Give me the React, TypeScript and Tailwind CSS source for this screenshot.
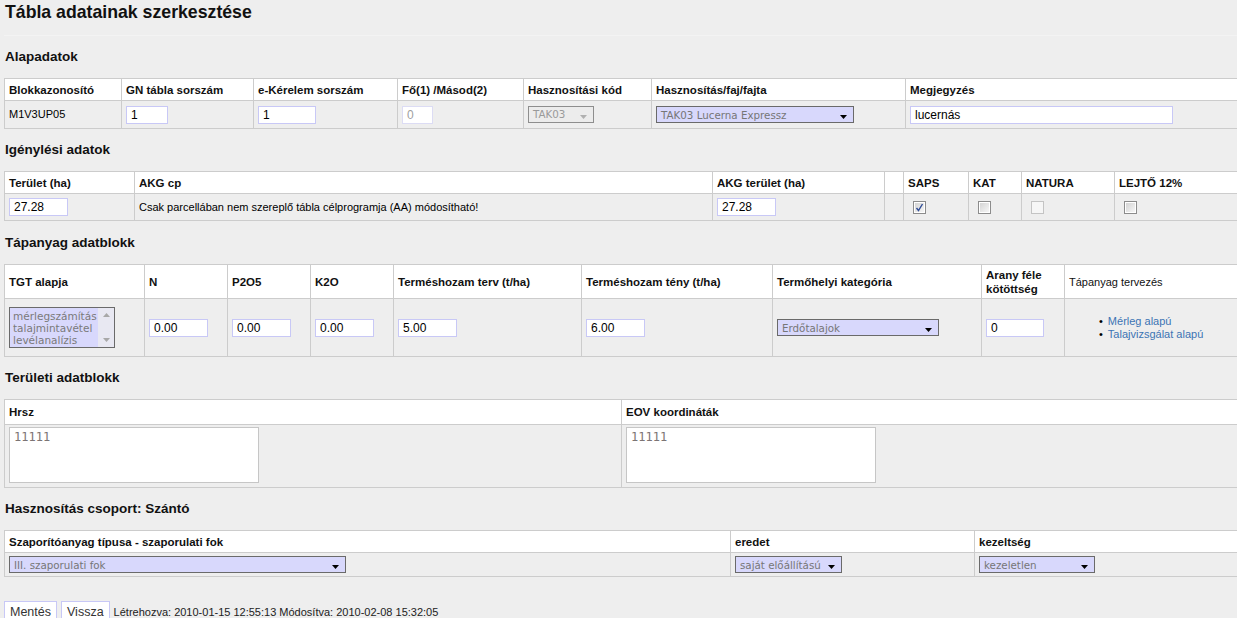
import React from "react";

const B = "border-[#cccccc]";

function Inp({ w, v, disabled }: { w: string; v: string; disabled?: boolean }) {
  return (
    <div
      className={`h-[18px] ${w} border bg-white flex items-center pl-[4px] text-[12px] ${
        disabled ? "border-[#dcdcf4] text-[#a0a0a0]" : "border-[#c8c8f6] text-black"
      }`}
    >
      {v}
    </div>
  );
}

function Arrow({ color = "#000" }: { color?: string }) {
  return (
    <svg width="7" height="4" viewBox="0 0 7 4" className="self-end mb-[3px] shrink-0">
      <path d="M0 0H7L3.5 4Z" fill={color} />
    </svg>
  );
}

function Sel({ w, v }: { w: string; v: string }) {
  return (
    <div
      className={`h-[17px] ${w} border border-[#6a6a6a] bg-[#d8d8fc] flex items-center justify-between pl-[4px] pr-[6px] text-[10.3px] text-[#767676] font-['DejaVu_Sans',Verdana,sans-serif]`}
    >
      <span className="leading-[14px]">{v}</span>
      <Arrow />
    </div>
  );
}

function Check({ checked, disabled }: { checked?: boolean; disabled?: boolean }) {
  if (disabled)
    return <div className="w-[13px] h-[13px] border border-[#c4c4c4] bg-[#f6f6f6]" />;
  return (
    <div className="w-[13px] h-[13px] border border-[#8c8c8c] bg-white p-[1px]">
      <div className="w-full h-full bg-linear-to-br from-[#d4d4d4] to-[#f6f6f6] flex items-center justify-center">
        {checked && (
          <svg width="9" height="9" viewBox="0 0 9 9">
            <path d="M1.5 5 L3.5 7.5 L7.5 1" stroke="#2f4c96" strokeWidth="1.4" fill="none" />
          </svg>
        )}
      </div>
    </div>
  );
}

const H = `bg-white border-r border-b ${B} pl-[4px] flex items-center font-bold text-[11.5px] leading-[14px] text-[#111]`;
const D = `border-r border-b ${B} pl-[4px] flex items-center text-[11px]`;

function Heading({ children, tall }: { children: React.ReactNode; tall?: boolean }) {
  return (
    <div
      className={`${tall ? "h-[43px] pt-[14px]" : "h-[42px] pt-[13px]"} pl-[1px] text-[13.5px] leading-[16px] font-bold text-[#111]`}
    >
      {children}
    </div>
  );
}

export default function App() {
  return (
    <div className="w-[1237px] h-[618px] overflow-hidden bg-[#eeeeee] text-black font-['Liberation_Sans',Arial,sans-serif]">
      <div className="h-[35px] pl-[5px] pt-[2px] text-[17.7px] leading-[20px] font-bold text-[#111]">
        Tábla adatainak szerkesztése
      </div>
      <div className="ml-[4px] border-t border-[#f3f3f3]">
        <Heading>Alapadatok</Heading>
        <div className={`grid grid-cols-[117px_132px_144px_126px_128px_254px_340px] grid-rows-[22px_28px] border-t border-l ${B}`}>
          <div className={H}>Blokkazonosító</div>
          <div className={H}>GN tábla sorszám</div>
          <div className={H}>e-Kérelem sorszám</div>
          <div className={H}>Fő(1) /Másod(2)</div>
          <div className={H}>Hasznosítási kód</div>
          <div className={H}>Hasznosítás/faj/fajta</div>
          <div className={H}>Megjegyzés</div>
          <div className={D}>M1V3UP05</div>
          <div className={D}>
            <Inp w="w-[42px]" v="1" />
          </div>
          <div className={D}>
            <Inp w="w-[58px]" v="1" />
          </div>
          <div className={D}>
            <Inp w="w-[31px]" v="0" disabled />
          </div>
          <div className={D}>
            <div className="h-[17px] w-[66px] border border-[#8e8e8e] bg-[#ececec] flex items-center justify-between pl-[4px] pr-[6px] text-[10.3px] text-[#9a9a9a] font-['DejaVu_Sans',Verdana,sans-serif]">
              <span>TAK03</span>
              <Arrow color="#b0b0b0" />
            </div>
          </div>
          <div className={D}>
            <Sel w="w-[198px]" v="TAK03 Lucerna Expressz" />
          </div>
          <div className={D}>
            <Inp w="w-[263px]" v="lucernás" />
          </div>
        </div>

        <Heading>Igénylési adatok</Heading>
        <div className={`grid grid-cols-[130px_578px_172px_19px_65px_53px_93px_130px] grid-rows-[22px_27px] border-t border-l ${B}`}>
          <div className={H}>Terület (ha)</div>
          <div className={H}>AKG cp</div>
          <div className={H}>AKG terület (ha)</div>
          <div className={H}></div>
          <div className={H}>SAPS</div>
          <div className={H}>KAT</div>
          <div className={H}>NATURA</div>
          <div className={H}>LEJTŐ 12%</div>
          <div className={D}>
            <Inp w="w-[59px]" v="27.28" />
          </div>
          <div className={D}>Csak parcellában nem szereplő tábla célprogramja (AA) módosítható!</div>
          <div className={D}>
            <Inp w="w-[59px]" v="27.28" />
          </div>
          <div className={D}></div>
          <div className={`${D} pl-[9px]`}>
            <Check checked />
          </div>
          <div className={`${D} pl-[9px]`}>
            <Check />
          </div>
          <div className={`${D} pl-[9px]`}>
            <Check disabled />
          </div>
          <div className={`${D} pl-[9px]`}>
            <Check />
          </div>
        </div>

        <Heading tall>Tápanyag adatblokk</Heading>
        <div className={`grid grid-cols-[140px_83px_83px_83px_188px_191px_209px_83px_180px] grid-rows-[34px_58px] border-t border-l ${B}`}>
          <div className={H}>TGT alapja</div>
          <div className={H}>N</div>
          <div className={H}>P2O5</div>
          <div className={H}>K2O</div>
          <div className={H}>Terméshozam terv (t/ha)</div>
          <div className={H}>Terméshozam tény (t/ha)</div>
          <div className={H}>Termőhelyi kategória</div>
          <div className={H}>Arany féle kötöttség</div>
          <div className={`${H} font-normal text-[11px]`}>Tápanyag tervezés</div>
          <div className={D}>
            <div className="w-[106px] h-[41px] border border-[#6a6a6a] bg-[#d8d8fc] flex">
              <div className="flex-1 pl-[3px] pt-[2px] text-[10.5px] leading-[12px] text-[#7a7a7a] font-['DejaVu_Sans',Verdana,sans-serif]">
                <div>mérlegszámítás</div>
                <div>talajmintavétel</div>
                <div>levélanalízis</div>
              </div>
              <div className="w-[16px] bg-[#e8e8f2] flex flex-col items-center justify-between py-[5px]">
                <svg width="7" height="4" viewBox="0 0 7 4">
                  <path d="M0 4H7L3.5 0Z" fill="#a8a8a8" />
                </svg>
                <svg width="7" height="4" viewBox="0 0 7 4">
                  <path d="M0 0H7L3.5 4Z" fill="#a8a8a8" />
                </svg>
              </div>
            </div>
          </div>
          <div className={D}>
            <Inp w="w-[59px]" v="0.00" />
          </div>
          <div className={D}>
            <Inp w="w-[59px]" v="0.00" />
          </div>
          <div className={D}>
            <Inp w="w-[59px]" v="0.00" />
          </div>
          <div className={D}>
            <Inp w="w-[59px]" v="5.00" />
          </div>
          <div className={D}>
            <Inp w="w-[59px]" v="6.00" />
          </div>
          <div className={D}>
            <Sel w="w-[162px]" v="Erdőtalajok" />
          </div>
          <div className={D}>
            <Inp w="w-[58px]" v="0" />
          </div>
          <div className={`${D} pl-[34px]`}>
            <div className="text-[11px] leading-[13px] text-[#3c74b4]">
              <div className="flex gap-[5px]">
                <span className="text-black">•</span>
                <span>Mérleg alapú</span>
              </div>
              <div className="flex gap-[5px]">
                <span className="text-black">•</span>
                <span>Talajvizsgálat alapú</span>
              </div>
            </div>
          </div>
        </div>

        <Heading>Területi adatblokk</Heading>
        <div className={`grid grid-cols-[617px_620px] grid-rows-[25px_63px] border-t border-l ${B}`}>
          <div className={H}>Hrsz</div>
          <div className={H}>EOV koordináták</div>
          <div className={`border-r border-b ${B} pl-[4px] pt-[2px]`}>
            <div className="w-[250px] h-[56px] border border-[#c6c6c6] bg-white pl-[4px] pt-[2px] text-[12px] leading-[14px] text-[#7c7474] font-['DejaVu_Sans_Mono',monospace]">
              11111
            </div>
          </div>
          <div className={`border-r border-b ${B} pl-[4px] pt-[2px]`}>
            <div className="w-[250px] h-[56px] border border-[#c6c6c6] bg-white pl-[4px] pt-[2px] text-[12px] leading-[14px] text-[#7c7474] font-['DejaVu_Sans_Mono',monospace]">
              11111
            </div>
          </div>
        </div>

        <Heading>Hasznosítás csoport: Szántó</Heading>
        <div className={`grid grid-cols-[726px_244px_270px] grid-rows-[22px_24px] border-t border-l ${B}`}>
          <div className={H}>Szaporítóanyag típusa - szaporulati fok</div>
          <div className={H}>eredet</div>
          <div className={H}>kezeltség</div>
          <div className={D}>
            <Sel w="w-[337px]" v="III. szaporulati fok" />
          </div>
          <div className={D}>
            <Sel w="w-[107px]" v="saját előállítású" />
          </div>
          <div className={D}>
            <Sel w="w-[116px]" v="kezeletlen" />
          </div>
        </div>

        <div className="mt-[24px] flex items-start gap-[4px]">
          <div className="h-[22px] border border-[#c8c8f6] bg-white px-[5px] flex items-center text-[12.5px] text-[#333]">
            Mentés
          </div>
          <div className="h-[22px] border border-[#c8c8f6] bg-white px-[5px] flex items-center text-[12.5px] text-[#333]">
            Vissza
          </div>
          <div className="h-[22px] flex items-center text-[11px] text-[#222]">
            Létrehozva: 2010-01-15 12:55:13 Módosítva: 2010-02-08 15:32:05
          </div>
        </div>
      </div>
    </div>
  );
}
